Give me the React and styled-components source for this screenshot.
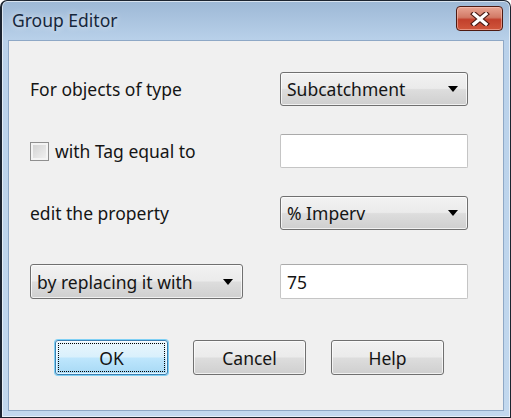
import styled, { createGlobalStyle } from 'styled-components'

const GlobalStyle = createGlobalStyle`
  html, body {
    margin: 0;
    padding: 0;
    background: #ffffff;
  }
  body {
    font-family: "Noto Sans", "Open Sans", sans-serif;
  }
`

function Arrow() {
  return (
    <svg width="10" height="6" viewBox="0 0 10 6">
      <path d="M0 0 L10 0 L5 6 Z" fill="#000" />
    </svg>
  )
}

function CloseX() {
  return (
    <svg width="20" height="14" viewBox="0 0 20 14">
      <path d="M4 2 L16 12 M16 2 L4 12" stroke="#4a1a14" strokeWidth="5.5" strokeLinecap="square" />
      <path d="M4 2 L16 12 M16 2 L4 12" stroke="#ffffff" strokeWidth="3.2" strokeLinecap="square" />
    </svg>
  )
}

function App() {
  return (
    <>
      <GlobalStyle />
      <Window>
        <TitleBar>
          <Title>Group Editor</Title>
          <CloseButton>
            <CloseX />
          </CloseButton>
        </TitleBar>
        <Client>
          <Form>
            <Label>For objects of type</Label>
            <Combo>
              <span>Subcatchment</span>
              <Arrow />
            </Combo>

            <CheckRow>
              <Check />
              <Label>with Tag equal to</Label>
            </CheckRow>
            <TextBox />

            <Label>edit the property</Label>
            <Combo>
              <span>% Imperv</span>
              <Arrow />
            </Combo>

            <Combo $wide $last>
              <span>by replacing it with</span>
              <Arrow />
            </Combo>
            <TextBox $last>75</TextBox>
          </Form>
          <ButtonRow>
            <Button $default>
              <Focus>OK</Focus>
            </Button>
            <Button>Cancel</Button>
            <Button>Help</Button>
          </ButtonRow>
        </Client>
      </Window>
    </>
  )
}

export default App

const Window = styled.div`
  width: 511px;
  height: 418px;
  box-sizing: border-box;
  display: flex;
  flex-direction: column;
  border: 1px solid #1c2430;
  border-left-width: 2px;
  border-radius: 7px 7px 0 0;
  background: linear-gradient(#9db8d6 0px, #b9d1ea 40px, #c2d8ee 100%);
  box-shadow: inset 0 0 0 1px rgba(255, 255, 255, 0.6);
`
const TitleBar = styled.div`
  height: 39px;
  display: flex;
  align-items: center;
  padding: 0 7px 0 10px;
`
const Title = styled.div`
  font-family: "Noto Sans", sans-serif;
  font-size: 17.5px;
  color: #16273c;
  text-shadow: 0 0 6px rgba(255, 255, 255, 0.8);
  margin-top: -1px;
`
const CloseButton = styled.div`
  margin-left: auto;
  margin-top: -4px;
  width: 47px;
  height: 25px;
  box-sizing: border-box;
  display: flex;
  align-items: center;
  justify-content: center;
  border: 1px solid #4e1a12;
  border-radius: 4px;
  background: linear-gradient(#e8a593 0%, #d27a66 45%, #c2402c 55%, #d0563c 100%);
  box-shadow: inset 0 0 0 1px rgba(255, 210, 200, 0.5);
`
const Client = styled.div`
  flex: 1;
  margin: 0 6px 6px 6px;
  background: #f0f0f0;
  border: 1px solid #8ea8c6;
  display: flex;
  flex-direction: column;
`
const Form = styled.div`
  display: grid;
  grid-template-columns: 250px 188px;
  row-gap: 28px;
  align-items: center;
  padding: 31px 0 0 21px;
`
const Label = styled.div`
  font-size: 17.5px;
  color: #151515;
`
const CheckRow = styled.div`
  display: flex;
  align-items: center;
  gap: 6px;
`
const Check = styled.div`
  width: 19px;
  height: 19px;
  box-sizing: border-box;
  border: 1px solid #8f8f8f;
  background: linear-gradient(135deg, #cfcfcf, #f4f4f4);
  box-shadow: inset 0 0 0 2px #f4f4f4;
`
const Combo = styled.div`
  width: ${p => (p.$wide ? '213px' : '188px')};
  height: ${p => (p.$last ? '35px' : '34px')};
  margin-top: ${p => (p.$last ? '6px' : '0')};
  box-sizing: border-box;
  display: flex;
  align-items: center;
  justify-content: space-between;
  padding: 0 9px 0 6px;
  border: 1px solid #707070;
  border-radius: 3px;
  background: linear-gradient(#f2f2f2 0%, #ebebeb 48%, #dddddd 52%, #cfcfcf 100%);
  box-shadow: inset 0 0 0 1px rgba(255, 255, 255, 0.7);
  font-size: 17.5px;
  color: #151515;
`
const TextBox = styled.div`
  width: 188px;
  height: ${p => (p.$last ? '35px' : '34px')};
  margin-top: ${p => (p.$last ? '6px' : '0')};
  box-sizing: border-box;
  display: flex;
  align-items: center;
  padding: 0 6px;
  background: #ffffff;
  border: 1px solid #c5c5c5;
  border-top-color: #aaaaaa;
  border-radius: 2px;
  font-size: 17.5px;
  color: #151515;
`
const ButtonRow = styled.div`
  display: flex;
  gap: 25px;
  padding: 41px 0 0 46px;
`
const Button = styled.div`
  width: 113px;
  height: 35px;
  box-sizing: border-box;
  display: flex;
  align-items: center;
  justify-content: center;
  padding: 2px;
  border: 1px solid ${p => (p.$default ? '#3c7fb1' : '#707070')};
  border-radius: 3px;
  background: ${p =>
    p.$default
      ? 'linear-gradient(#eaf6fd 0%, #d9f0fc 48%, #bee6fd 52%, #a7d9f5 100%)'
      : 'linear-gradient(#f2f2f2 0%, #ebebeb 48%, #dddddd 52%, #cfcfcf 100%)'};
  box-shadow: ${p => (p.$default ? '0 0 0 1px #7fd0f5, inset 0 0 0 1px rgba(255,255,255,0.7)' : 'inset 0 0 0 1px rgba(255,255,255,0.7)')};
  font-size: 17.5px;
  color: #151515;
`
const Focus = styled.div`
  width: 100%;
  height: 100%;
  box-sizing: border-box;
  display: flex;
  align-items: center;
  justify-content: center;
  border: 1px dotted #000000;
`
